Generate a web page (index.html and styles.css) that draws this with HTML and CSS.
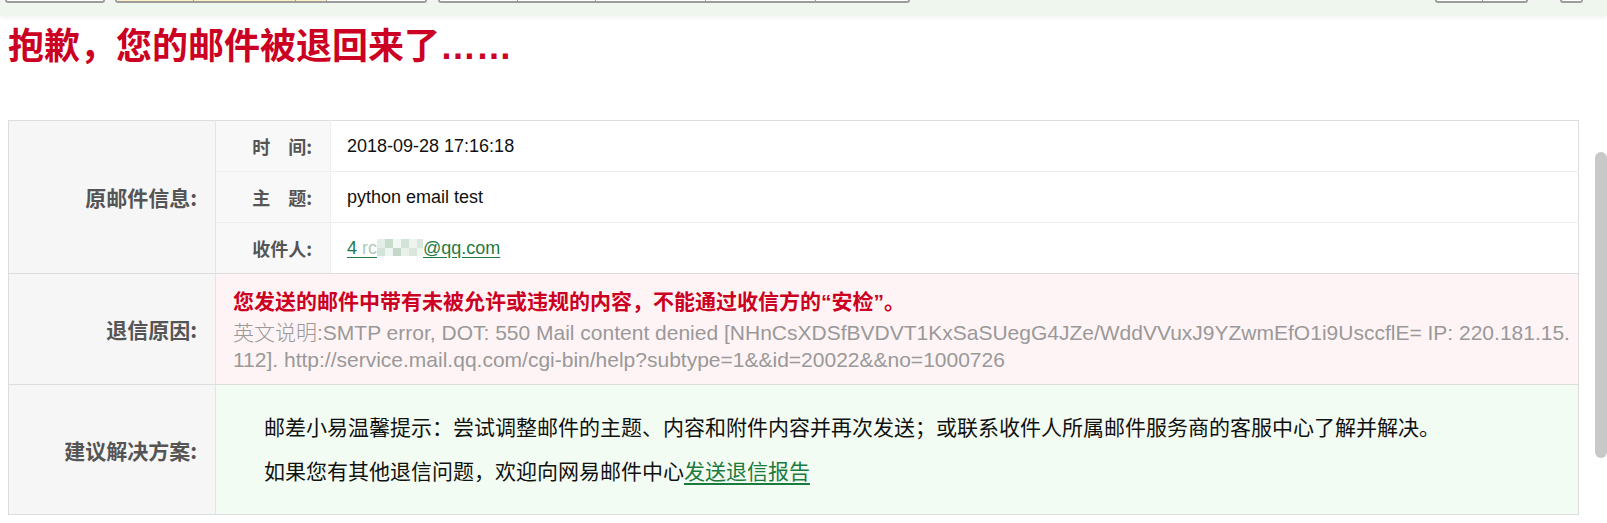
FILE: index.html
```html
<!DOCTYPE html>
<html lang="zh-CN">
<head>
<meta charset="utf-8">
<title>退信通知</title>
<link rel="stylesheet" href="styles.css">
</head>
<body>
<div class="topbar">
  <span class="btn b1"></span>
  <span class="btn b2"><span class="seg hl s1"></span><span class="seg hl s2"></span><span class="seg hl s3"></span><span class="seg s4"></span></span>
  <span class="btn b3"><span class="seg s5"></span><span class="seg s6"></span><span class="seg s7"></span><span class="seg s8"></span><span class="seg s9"></span></span>
  <span class="btn b4"><span class="seg s10"></span><span class="seg s11"></span></span>
  <span class="btn round"></span>
</div>

<h1 class="title">抱歉，您的邮件被退回来了<span class="dots">……</span></h1>

<table class="bounce">
  <colgroup><col class="c1"><col class="c2"><col class="c3"></colgroup>
  <tr class="info">
    <th class="label" rowspan="3">原邮件信息:</th>
    <td class="sub">时　间:</td>
    <td class="val">2018-09-28 17:16:18</td>
  </tr>
  <tr class="info">
    <td class="sub">主　题:</td>
    <td class="val">python email test</td>
  </tr>
  <tr class="info last">
    <td class="sub">收件人:</td>
    <td class="val"><a class="mail" href="#">4 <span class="blurred">rc</span><span class="mosaic"></span>@qq.com</a></td>
  </tr>
  <tr class="reason">
    <th class="label">退信原因:</th>
    <td class="reason-cell" colspan="2">
      <div class="reason-main">您发送的邮件中带有未被允许或违规的内容，不能通过收信方的<span class="q">“</span>安检<span class="q">”</span>。</div>
      <div class="reason-en"><span class="cjk">英文说明</span>:SMTP error, DOT: 550 Mail content denied [NHnCsXDSfBVDVT1KxSaSUegG4JZe/WddVVuxJ9YZwmEfO1i9UsccflE= IP: 220.181.15.<br>112]. http://service.mail.qq.com/cgi-bin/help?subtype=1&amp;&amp;id=20022&amp;&amp;no=1000726</div>
    </td>
  </tr>
  <tr class="solution">
    <th class="label">建议解决方案:</th>
    <td class="solution-cell" colspan="2">
      <p class="tip">邮差小易温馨提示：尝试调整邮件的主题、内容和附件内容并再次发送；或联系收件人所属邮件服务商的客服中心了解并解决。</p>
      <p class="tip">如果您有其他退信问题，欢迎向网易邮件中心<a class="report" href="#">发送退信报告</a></p>
    </td>
  </tr>
</table>

<div class="scrollbar"><div class="thumb"></div></div>
</body>
</html>
```

FILE: styles.css
```css
html, body {
  margin: 0;
  padding: 0;
  background: #ffffff;
  overflow: hidden;
}

body {
  font-family: "Liberation Sans", "Noto Sans CJK SC", sans-serif;
  color: #222;
}

/* top toolbar strip (bottoms of the toolbar buttons) */
.topbar {
  height: 15px;
  background: #eff6ee;
  display: flex;
  align-items: flex-start;
  box-shadow: 0 2px 5px rgba(0, 0, 0, 0.07);
  position: relative;
  z-index: 1;
}

.btn {
  display: flex;
  height: 1px;
  border: 2px solid #9c9c9c;
  border-top: none;
  border-radius: 0 0 6px 6px;
  background: #ffffff;
  overflow: hidden;
}

.b1 { margin-left: 5px; width: 96px; }
.b2 { margin-left: 10px; width: 308px; }
.b3 { margin-left: 11px; width: 468px; }
.b4 { margin-left: auto; width: 89px; }
.round { margin-left: 32px; margin-right: 24px; width: 19px; border-radius: 0 0 12px 12px; }

.seg { height: 100%; border-right: 1px solid #9c9c9c; }
.seg:last-child { border-right: none; flex: 1; }
.hl { background: #fbf1c4; }
.s1 { width: 76px; }
.s2 { width: 101px; }
.s3 { width: 30px; }
.s5 { width: 77px; }
.s6 { width: 77px; }
.s7 { width: 109px; }
.s8 { width: 109px; }
.s10 { width: 45px; }

/* title */
.title {
  margin: 8px 0 0 8px;
  font-family: "Noto Sans CJK SC", sans-serif;
  font-size: 36px;
  line-height: 40px;
  font-weight: 700;
  color: #cc0022;
}

.dots {
  font-family: "Liberation Sans", sans-serif;
  line-height: 0;
}

/* bounce table */
.bounce {
  margin: 57px 0 0 8px;
  width: 1571px;
  border-collapse: collapse;
  table-layout: fixed;
  font-size: 18px;
  border: 1px solid #dddddd;
}

.c1 { width: 207px; }
.c2 { width: 115px; }

.bounce th, .bounce td {
  padding: 0;
  vertical-align: middle;
}

.label {
  background: #f6f6f6;
  border-right: 1px solid #e4e4e4;
  border-bottom: 1px solid #dddddd;
  text-align: right;
  padding-right: 18px !important;
  font-family: "Noto Sans CJK SC", sans-serif;
  font-size: 21px;
  font-weight: 700;
  color: #555555;
}

.info td {
  height: 50px;
  border-bottom: 1px solid #eeeeee;
}

.info.last td {
  border-bottom: 1px solid #dddddd;
}

.sub {
  background: #f8f8f8;
  border-right: 1px solid #eeeeee;
  text-align: right;
  padding-right: 18px !important;
  font-family: "Noto Sans CJK SC", sans-serif;
  font-weight: 700;
  color: #555555;
}

.val {
  padding-left: 16px !important;
  color: #111111;
}

.mail {
  color: #1f7a43;
  text-decoration: underline;
  text-underline-offset: 3px;
}

.blurred {
  color: #a9cbb4;
}

.mosaic {
  display: inline-block;
  width: 46px;
  height: 17px;
  vertical-align: -2px;
  background:
    linear-gradient(90deg, #e4eee7 0 8px, #c7dccd 8px 16px, #f3f7f4 16px 24px, #d2e3d7 24px 32px, #eef4ef 32px 40px, #dbe8de 40px 46px) top / 46px 9px no-repeat,
    linear-gradient(90deg, #d3e4d8 0 8px, #eef4f0 8px 16px, #c3d8c9 16px 24px, #e9f1eb 24px 32px, #d8e6dc 32px 40px, #f1f6f2 40px 46px) bottom / 46px 8px no-repeat;
}

.reason th, .reason td {
  border-bottom: 1px solid #dddddd;
}

.reason-cell {
  background: #fff4f5;
  padding: 11px 4px 11px 17px !important;
}

.reason-main {
  font-family: "Noto Sans CJK SC", sans-serif;
  font-size: 21px;
  line-height: 30px;
  font-weight: 700;
  color: #cc0022;
  margin-bottom: 4px;
}

.q {
  font-family: "Liberation Sans", sans-serif;
  line-height: 0;
}

.reason-en {
  font-size: 21px;
  line-height: 27px;
  color: #999999;
  word-break: break-all;
}

.cjk {
  font-family: "Noto Sans CJK SC", sans-serif;
  font-weight: 300;
  line-height: 0;
}

.solution-cell {
  background: #f3fcf2;
  padding: 19px 10px 22px 48px !important;
}

.tip {
  margin: 0;
  font-family: "Noto Sans CJK SC", sans-serif;
  font-size: 21px;
  line-height: 44px;
  color: #111111;
}

.report {
  color: #1b7a3e;
  text-decoration: underline;
  text-underline-offset: 4px;
}

/* scrollbar thumb overlay */
.scrollbar {
  position: fixed;
  top: 152px;
  right: 0;
  width: 12px;
  height: 306px;
}

.thumb {
  width: 100%;
  height: 100%;
  background: #c8c8c8;
  border-radius: 6px;
}
```
